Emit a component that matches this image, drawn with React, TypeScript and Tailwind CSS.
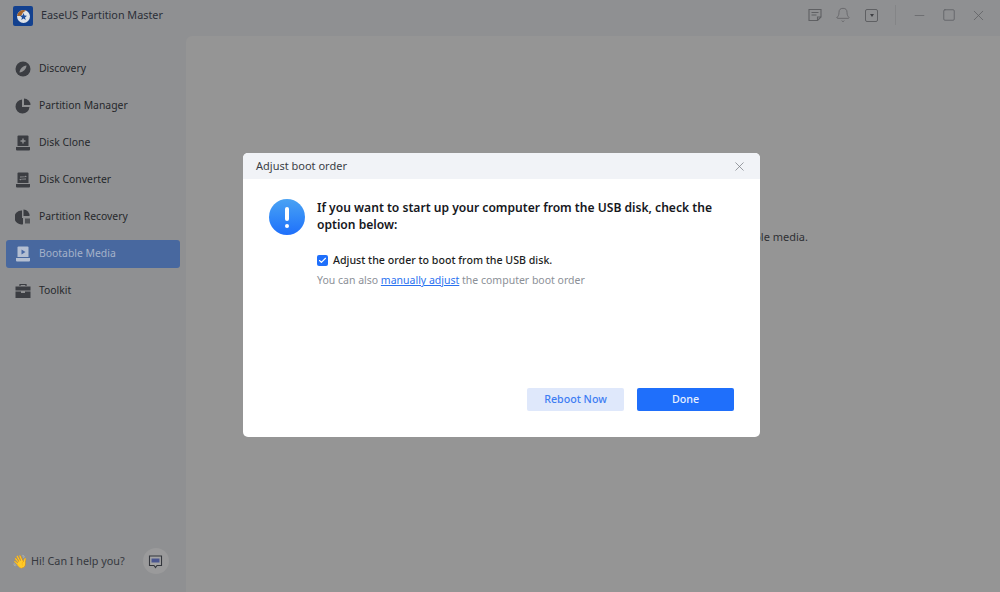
import { X, Minus, Square, Bell, Check } from "lucide-react";

const font = { fontFamily: '"Noto Sans", "Open Sans", sans-serif' };

type NavIconProps = {
  name: string;
  color: string;
};

function NavIcon({ name, color }: NavIconProps) {
  if (name === "Discovery") {
    return (
      <svg width="16" height="16" viewBox="0 0 16 16">
        <circle cx="8" cy="8" r="7.5" fill={color} />
        <path d="M4.5 11.5C5 7.5 7.5 5 11.5 4.5C11 8.5 8.5 11 4.5 11.5Z" fill="#8f9092" />
      </svg>
    );
  }
  if (name === "Partition Manager") {
    return (
      <svg width="16" height="16" viewBox="0 0 16 16">
        <path d="M7 1.5A7 7 0 1 0 14.5 9H7Z" fill={color} />
        <path d="M9 0.5A6.5 6.5 0 0 1 15.5 7H9Z" fill={color} />
      </svg>
    );
  }
  if (name === "Partition Recovery") {
    return (
      <svg width="16" height="16" viewBox="0 0 16 16">
        <path d="M7 1.5A7 7 0 1 0 8 15.3L8 9H7Z" fill={color} />
        <path d="M8.5 0.5A6 6 0 0 1 14.5 7H8.5Z" fill={color} />
        <path d="M10 9.5L15 9.5L15 14.5L10 14.5Z" fill={color} opacity="0.75" />
      </svg>
    );
  }
  if (name === "Toolkit") {
    return (
      <svg width="16" height="16" viewBox="0 0 16 16">
        <path d="M5 3V1.5H11V3" fill="none" stroke={color} strokeWidth="1.2" />
        <path d="M0.5 3.5H15.5V7.5H0.5Z" fill={color} />
        <path d="M0.5 8.5H6V10H10V8.5H15.5V15H0.5Z" fill={color} />
      </svg>
    );
  }
  const light = name === "Bootable Media";
  const inner = light ? "#4a6aa5" : "#8f9092";
  return (
    <svg width="16" height="16" viewBox="0 0 16 16">
      <path d="M2.5 1.5A1 1 0 0 1 3.5 .5H12.5A1 1 0 0 1 13.5 1.5V11H2.5Z" fill={color} />
      <path d="M1 12H15V14.5A1 1 0 0 1 14 15.5H2A1 1 0 0 1 1 14.5Z" fill={color} />
      {name === "Disk Clone" && <path d="M7.3 3.5H8.7V5.3H10.5V6.7H8.7V8.5H7.3V6.7H5.5V5.3H7.3Z" fill={inner} />}
      {name === "Disk Converter" && <path d="M5 4.5H10V3.5L12 5L5 5.5ZM11 7.5H6V8.5L4 7L11 6.5Z" fill={inner} />}
      {light && <path d="M6.5 3.5L10.5 6L6.5 8.5Z" fill={inner} />}
    </svg>
  );
}

const navItems = [
  "Discovery",
  "Partition Manager",
  "Disk Clone",
  "Disk Converter",
  "Partition Recovery",
  "Bootable Media",
  "Toolkit",
];

function Sidebar() {
  return (
    <aside className="flex w-[186px] shrink-0 flex-col">
      <div className="flex h-[31px] items-center pl-[13px]">
        <svg width="20" height="20" viewBox="0 0 20 20">
          <rect width="20" height="20" rx="2" fill="#13418f" />
          <circle cx="10.5" cy="10.5" r="6.5" fill="#dfe3e8" />
          <path d="M4 10A6.5 6.5 0 0 1 13 4.5L10 6.5L8 10Z" fill="#a5632a" />
          <path d="M10.5 7L11.5 9.5L14 9.8L12 11.4L12.7 14L10.5 12.6L8.3 14L9 11.4L7 9.8L9.5 9.5Z" fill="#1c4d9c" />
        </svg>
        <span className="ml-2 text-[10.8px] text-[#2b2f38]">EaseUS Partition Master</span>
      </div>
      <nav className="mt-[24px] flex flex-col gap-[9px] px-[6px]">
        {navItems.map((item) => {
          const active = item === "Bootable Media";
          return (
            <div
              key={item}
              className={`flex h-[28px] items-center gap-[8px] rounded-[3px] pl-[9px] text-[10.4px] ${
                active ? "bg-[#48689f] text-[#a5b2c9]" : "text-[#26282c]"
              }`}
            >
              <NavIcon name={item} color={active ? "#b4bfd2" : "#3b3d42"} />
              <span>{item}</span>
            </div>
          );
        })}
      </nav>
      <div className="mt-auto flex items-center pb-[18px] pl-[12px]">
        <span className="text-[13px] leading-none">👋</span>
        <span className="ml-[3px] text-[10.8px] text-[#35383e]">Hi! Can I help you?</span>
        <div className="ml-[18px] flex size-[26px] items-center justify-center rounded-full bg-[#9a9a9b]">
          <svg width="15" height="15" viewBox="0 0 15 15">
            <path d="M1.5 2H13.5V11.5H9L7.5 13.5L6 11.5H1.5Z" fill="#a3a3a3" stroke="#33363c" strokeWidth="1.1" />
            <path d="M3.5 4.5H11.5V8.5H3.5Z" fill="#4a5690" />
          </svg>
        </div>
      </div>
    </aside>
  );
}

function TopBar() {
  return (
    <header className="flex h-[36px] items-center justify-end pb-[6px] pr-[13px] text-[#5f6063]">
      <svg width="14" height="14" viewBox="0 0 14 14" fill="none" stroke="currentColor" strokeWidth="1.1">
        <path d="M1 1.5H13V9L9.5 12.5H1Z" />
        <path d="M3.5 4.5H10.5M3.5 7H8.5M13 9H9.5V12.5" />
      </svg>
      <Bell className="ml-[13px]" size={16} strokeWidth={1.2} />
      <div className="ml-[14px] flex size-[13px] items-center justify-center rounded-[2px] border border-current">
        <div className="size-0 border-x-[2.5px] border-t-[3px] border-x-transparent border-t-[#3f4044]" />
      </div>
      <div className="ml-[17px] h-[20px] w-px bg-[#848587]" />
      <Minus className="ml-[16px]" size={15} strokeWidth={1.1} />
      <Square className="ml-[15px]" size={14} strokeWidth={1.4} />
      <X className="ml-[14px]" size={17} strokeWidth={1.1} />
    </header>
  );
}

function BootOrderDialog() {
  return (
    <div className="absolute left-[243px] top-[153px] flex h-[284px] w-[517px] flex-col overflow-hidden rounded-[5px] bg-white">
      <div className="flex h-[26px] shrink-0 items-center justify-between bg-[#f1f3f7] pl-[13px] pr-[13px] text-[11px] text-[#3c3f46]">
        <span>Adjust boot order</span>
        <X size={15} strokeWidth={1.1} className="text-[#70747b]" />
      </div>
      <div className="flex flex-1 flex-col px-[26px] pt-[20px]">
        <div className="flex">
          <div className="flex size-[36px] shrink-0 flex-col items-center justify-center gap-[3px] rounded-full bg-gradient-to-b from-[#4aa2f3] to-[#1f6ffb]">
            <div className="h-[14px] w-[3.5px] rounded-full bg-white" />
            <div className="size-[4px] rounded-full bg-white" />
          </div>
          <div className="ml-[12px]">
            <p className="text-[12.1px] font-semibold leading-[17px] text-[#16181d]">
              If you want to start up your computer from the USB disk, check the
              <br />
              option below:
            </p>
            <div className="mt-[20px] flex items-center gap-[5px]">
              <div className="flex size-[11px] items-center justify-center rounded-[2px] bg-[#1f6ffb]">
                <Check size={9} strokeWidth={3} className="text-white" />
              </div>
              <span className="text-[10.65px] font-medium text-[#1c1e23]">
                Adjust the order to boot from the USB disk.
              </span>
            </div>
            <p className="mt-[4px] text-[10.5px] text-[#8c9097]">
              You can also <span className="text-[#2a72f0] underline">manually adjust</span> the computer boot order
            </p>
          </div>
        </div>
        <div className="mt-auto flex justify-end gap-[13px] pb-[26px] text-[10.7px] font-medium">
          <button className="h-[23px] w-[97px] rounded-[2px] bg-[#dfe8fb] text-[#3e7df3]">Reboot Now</button>
          <button className="h-[23px] w-[97px] rounded-[2px] bg-[#1f6ffb] text-[#e8f0ff]">Done</button>
        </div>
      </div>
    </div>
  );
}

export default function App() {
  return (
    <div className="relative flex h-[592px] w-[1000px] overflow-hidden bg-[#8f9092]" style={font}>
      <Sidebar />
      <div className="flex flex-1 flex-col">
        <TopBar />
        <main className="flex flex-1 justify-end rounded-tl-[6px] bg-[#959595] pr-[192px] pt-[193px]">
          <p className="text-[11px] leading-[15px] text-[#2f3034]">Please choose a location to create bootable media.</p>
        </main>
      </div>
      <BootOrderDialog />
    </div>
  );
}
